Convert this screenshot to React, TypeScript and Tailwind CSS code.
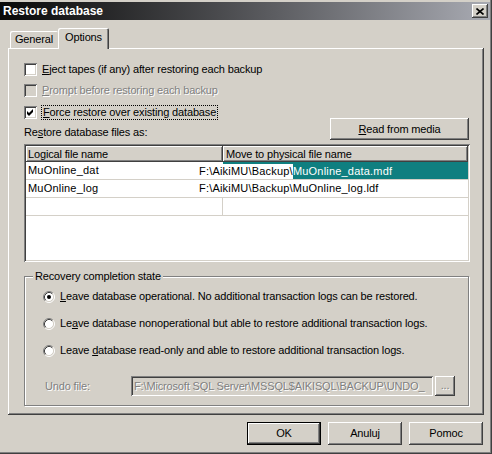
import React from "react";

const raised =
  "shadow-[inset_-1px_-1px_#404040,inset_1px_1px_#ffffff,inset_-2px_-2px_#808080,inset_2px_2px_#d4d0c8]";
const sunken =
  "shadow-[inset_1px_1px_#808080,inset_-1px_-1px_#ffffff,inset_2px_2px_#404040,inset_-2px_-2px_#d4d0c8]";
const headerCell =
  "shadow-[inset_-1px_-1px_#404040,inset_1px_1px_#ffffff,inset_-2px_-2px_#808080]";
const disabledText = "text-[#808080] [text-shadow:1px_1px_#ffffff]";

function Check({ checked, disabled }: { checked?: boolean; disabled?: boolean }) {
  return (
    <span
      className={`relative inline-block h-[13px] w-[13px] shrink-0 ${sunken} ${
        disabled ? "bg-[#d4d0c8]" : "bg-white"
      }`}
    >
      {checked && (
        <svg className="absolute inset-0" width="13" height="13" viewBox="0 0 13 13">
          <path d="M3 5 L5 7 L9 3 L9 6 L5 10 L3 8 Z" fill="#000" />
        </svg>
      )}
    </span>
  );
}

function Radio({ checked }: { checked?: boolean }) {
  return (
    <svg width="12" height="12" viewBox="0 0 12 12" className="shrink-0">
      <circle cx="6" cy="6" r="4.5" fill="#fff" />
      <path d="M2.11 9.89 A5.5 5.5 0 0 1 9.89 2.11" stroke="#808080" fill="none" />
      <path d="M9.89 2.11 A5.5 5.5 0 0 1 2.11 9.89" stroke="#ffffff" fill="none" />
      <path d="M2.82 9.18 A4.5 4.5 0 0 1 9.18 2.82" stroke="#404040" fill="none" />
      <path d="M9.18 2.82 A4.5 4.5 0 0 1 2.82 9.18" stroke="#d4d0c8" fill="none" />
      {checked && <circle cx="6" cy="6" r="2" fill="#000" />}
    </svg>
  );
}

function Button({
  children,
  width,
  isDefault,
}: {
  children: React.ReactNode;
  width: string;
  isDefault?: boolean;
}) {
  return (
    <div
      className={`flex h-[23px] items-center justify-center ${width} ${
        isDefault
          ? "shadow-[inset_0_0_0_1px_#000000,inset_-2px_-2px_#404040,inset_2px_2px_#ffffff,inset_-3px_-3px_#808080]"
          : raised
      }`}
    >
      {children}
    </div>
  );
}

export default function App() {
  return (
    <div
      className="flex h-[454px] w-[492px] flex-col bg-[#d4d0c8] text-[11px] leading-[13px] tracking-[-0.15px] text-black shadow-[inset_-1px_-1px_#404040,inset_-2px_-2px_#808080]"
      style={{ fontFamily: '"Liberation Sans", Arial, sans-serif' }}
    >
      {/* title bar */}
      <div className="mt-[2px] mr-[2px] flex h-[18px] items-center justify-between bg-gradient-to-r from-[#0a0a0a] to-[#a9abb3] pl-[3px] pr-[2px]">
        <span className="text-[12px] font-bold tracking-normal text-white">Restore database</span>
        <div className={`flex h-[14px] w-[16px] items-center justify-center bg-[#d4d0c8] ${raised}`}>
          <svg width="8" height="7" viewBox="0 0 8 7">
            <path d="M0.5 0.5 L7.5 6.5 M7.5 0.5 L0.5 6.5" stroke="#000" strokeWidth="1.6" />
          </svg>
        </div>
      </div>

      {/* tabs */}
      <div className="mt-[8px] flex h-[20px] items-end pl-[10px]">
        <div className="flex h-[17px] w-[48px] items-center justify-center rounded-t-[2px] shadow-[inset_1px_1px_#ffffff]">
          General
        </div>
        <div className="relative z-10 -mb-[1px] flex h-[21px] w-[51px] items-start justify-center rounded-t-[2px] bg-[#d4d0c8] pt-[3px] shadow-[inset_1px_1px_#ffffff,inset_-1px_0_#404040,inset_-2px_0_#808080]">
          Options
        </div>
      </div>

      {/* panel */}
      <div className="mx-[8px] flex h-[367px] w-[476px] flex-col pt-[11px] pl-[16px] pr-[14px] shadow-[inset_-1px_-1px_#404040,inset_1px_1px_#ffffff,inset_-2px_-2px_#808080]">
        <div className="flex h-[21px] items-center gap-[5px]">
          <Check />
          <span>
            <u>E</u>ject tapes (if any) after restoring each backup
          </span>
        </div>
        <div className="flex h-[21px] items-center gap-[5px]">
          <Check disabled />
          <span className={disabledText}>
            <u>P</u>rompt before restoring each backup
          </span>
        </div>
        <div className="flex h-[22px] items-center gap-[4px]">
          <Check checked />
          <span className="border border-dotted border-black px-[1px]">
            <u>F</u>orce restore over existing database
          </span>
        </div>

        <div className="-mt-[5px] flex h-[22px] items-end justify-between">
          <span className="pb-[1px]">
            Re<u>s</u>tore database files as:
          </span>
          <div className={`mr-[1px] flex h-[22px] w-[139px] items-center justify-center ${raised}`}>
            <span>
              <u>R</u>ead from media
            </span>
          </div>
        </div>

        {/* file table */}
        <div className={`mt-[4px] flex h-[118px] w-[446px] flex-col bg-white p-[2px] tracking-[0.2px] ${sunken}`}>
          <div className="flex h-[16px] bg-[#d4d0c8] tracking-[-0.15px]">
            <div className={`flex w-[197px] items-center pl-[2px] ${headerCell}`}>Logical file name</div>
            <div className={`flex flex-1 items-center pl-[3px] ${headerCell}`}>Move to physical file name</div>
          </div>
          <div className="flex h-[18px] border-b border-[#d4d0c8]">
            <div className="flex w-[171px] items-center pl-[2px]">MuOnline_dat</div>
            <div className="flex flex-1 flex-col">
              <div className="ml-[26px] h-[2px] bg-[#0f7f80]" />
              <div className="flex flex-1 items-center pl-[2px]">
                <span>{"F:\\AikiMU\\Backup\\"}</span>
                <span className="flex h-full flex-1 items-center bg-[#0f7f80] text-white">MuOnline_data.mdf</span>
              </div>
            </div>
          </div>
          <div className="flex h-[18px] border-b border-[#d4d0c8]">
            <div className="flex w-[171px] items-center pl-[2px]">MuOnline_log</div>
            <div className="flex flex-1 items-center pl-[2px]">{"F:\\AikiMU\\Backup\\MuOnline_log.ldf"}</div>
          </div>
          <div className="flex h-[18px] border-b border-[#d4d0c8]">
            <div className="w-[197px] border-r border-[#d4d0c8]" />
            <div className="flex-1" />
          </div>
        </div>

        {/* recovery group */}
        <div className="mt-[14px] flex h-[130px] w-[445px] flex-col border border-[#808080] pl-[18px] shadow-[inset_1px_1px_#ffffff,1px_1px_#ffffff]">
          <span className="-mt-[7px] -ml-[10px] w-fit bg-[#d4d0c8] px-[2px]">Recovery completion state</span>
          <div className="flex h-[27px] items-center gap-[5px]">
            <Radio checked />
            <span>
              <u>L</u>eave database operational. No additional transaction logs can be restored.
            </span>
          </div>
          <div className="flex h-[27px] items-center gap-[5px]">
            <Radio />
            <span>
              Le<u>a</u>ve database nonoperational but able to restore additional transaction logs.
            </span>
          </div>
          <div className="flex h-[27px] items-center gap-[5px]">
            <Radio />
            <span>
              Leave <u>d</u>atabase read-only and able to restore additional transaction logs.
            </span>
          </div>
          <div className="mt-[12px] flex h-[20px] items-center">
            <span className={`w-[88px] pl-[2px] ${disabledText}`}>Undo file:</span>
            <div className={`flex h-[20px] w-[302px] items-center overflow-hidden whitespace-nowrap pl-[3px] ${sunken} ${disabledText}`}>
              {"F:\\Microsoft SQL Server\\MSSQL$AIKISQL\\BACKUP\\UNDO_"}
            </div>
            <div className={`ml-[2px] flex h-[20px] w-[20px] items-end justify-center pb-[4px] ${raised} ${disabledText}`}>
              ...
            </div>
          </div>
        </div>
      </div>

      {/* dialog buttons */}
      <div className="mt-[7px] flex justify-end gap-[7px] pr-[9px]">
        <Button width="w-[74px]" isDefault>
          OK
        </Button>
        <Button width="w-[74px]">Anuluj</Button>
        <Button width="w-[74px]">Pomoc</Button>
      </div>
    </div>
  );
}
